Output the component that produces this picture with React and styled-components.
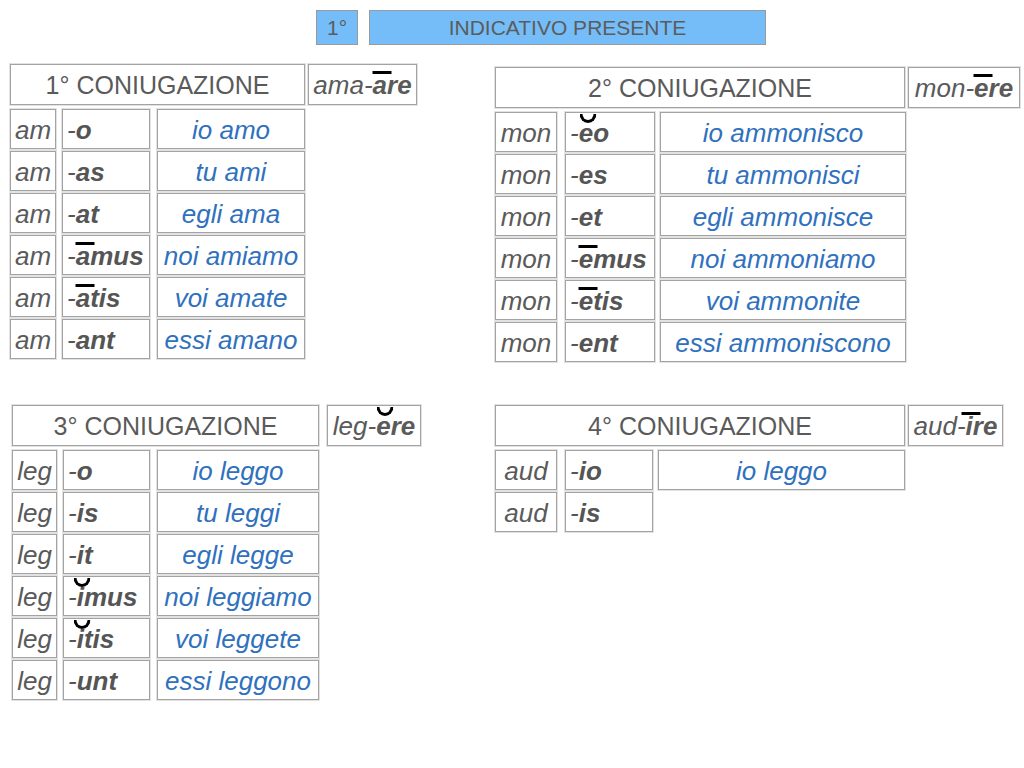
import React from 'react'
import styled, { createGlobalStyle, css } from 'styled-components'

const Global = createGlobalStyle`
  body {
    margin: 0;
    background: #fff;
    font-family: "Liberation Sans", Arial, sans-serif;
  }
`

const Long = ({ children }) => <Mark $kind="long">{children}</Mark>
const Short = ({ children }) => <Mark $kind="short">{children}</Mark>

const sections = [
  {
    title: '1° CONIUGAZIONE',
    inf: ['ama-', <><Long>a</Long>re</>],
    dx: 0, dy: 0, head: 295, infGap: 3, inf_w: 109,
    cols: [46, 88, 148], gaps: [6, 7],
    rows: [
      ['am', <>o</>, 'io amo'],
      ['am', <>as</>, 'tu ami'],
      ['am', <>at</>, 'egli ama'],
      ['am', <><Long>a</Long>mus</>, 'noi amiamo'],
      ['am', <><Long>a</Long>tis</>, 'voi amate'],
      ['am', <>ant</>, 'essi amano'],
    ],
  },
  {
    title: '2° CONIUGAZIONE',
    inf: ['mon-', <><Long>e</Long>re</>],
    dx: 0, dy: 3, head: 410, infGap: 3, inf_w: 112,
    cols: [62, 90, 246], gaps: [8, 5],
    rows: [
      ['mon', <><Short>e</Short>o</>, 'io ammonisco'],
      ['mon', <>es</>, 'tu ammonisci'],
      ['mon', <>et</>, 'egli ammonisce'],
      ['mon', <><Long>e</Long>mus</>, 'noi ammoniamo'],
      ['mon', <><Long>e</Long>tis</>, 'voi ammonite'],
      ['mon', <>ent</>, 'essi ammoniscono'],
    ],
  },
  {
    title: '3° CONIUGAZIONE',
    inf: ['leg-', <><Short>e</Short>re</>],
    dx: 2, dy: 0, head: 307, infGap: 8, inf_w: 94,
    cols: [45, 87, 162], gaps: [6, 7],
    rows: [
      ['leg', <>o</>, 'io leggo'],
      ['leg', <>is</>, 'tu leggi'],
      ['leg', <>it</>, 'egli legge'],
      ['leg', <><Short>i</Short>mus</>, 'noi leggiamo'],
      ['leg', <><Short>i</Short>tis</>, 'voi leggete'],
      ['leg', <>unt</>, 'essi leggono'],
    ],
  },
  {
    title: '4° CONIUGAZIONE',
    inf: ['aud-', <><Long>i</Long>re</>],
    dx: 0, dy: 0, head: 410, infGap: 3, inf_w: 95,
    cols: [62, 88, 247], gaps: [8, 5],
    rows: [
      ['aud', <>io</>, 'io leggo'],
      ['aud', <>is</>, null],
    ],
  },
]

const App = () => {
  return (
    <Page>
      <Global />
      <TopBar>
        <NumBox>1°</NumBox>
        <TitleBox>INDICATIVO PRESENTE</TitleBox>
      </TopBar>
      <Grid>
        {sections.map((s) => (
          <Section key={s.title} $dx={s.dx} $dy={s.dy}>
            <HeadRow $gap={s.infGap}>
              <Header $w={s.head}>{s.title}</Header>
              <Infinitive $w={s.inf_w}>
                {s.inf[0]}
                <b>{s.inf[1]}</b>
              </Infinitive>
            </HeadRow>
            <Rows>
              {s.rows.map((r, i) => (
                <Row key={i}>
                  <Stem $w={s.cols[0]}>{r[0]}</Stem>
                  <Ending $w={s.cols[1]} $ml={s.gaps[0]}>
                    <Dash>-</Dash>
                    <b>{r[1]}</b>
                  </Ending>
                  {r[2] && (
                    <Translation $w={s.cols[2]} $ml={s.gaps[1]}>
                      {r[2]}
                    </Translation>
                  )}
                </Row>
              ))}
            </Rows>
          </Section>
        ))}
      </Grid>
    </Page>
  )
}

const Page = styled.div`
  width: 1024px;
  height: 768px;
  box-sizing: border-box;
  padding-top: 10px;
  overflow: hidden;
`

const TopBar = styled.div`
  display: flex;
  gap: 11px;
  padding-left: 316px;
  height: 35px;
`

const blueBox = css`
  box-sizing: border-box;
  height: 35px;
  background: #74bdf8;
  border: 1px solid #9a9a9a;
  color: #5c5c5c;
  font-size: 21px;
  display: flex;
  align-items: center;
  justify-content: center;
`

const NumBox = styled.div`
  ${blueBox};
  width: 42px;
`

const TitleBox = styled.div`
  ${blueBox};
  width: 397px;
`

const Grid = styled.div`
  display: grid;
  grid-template-columns: 485px 1fr;
  align-items: start;
  row-gap: 43px;
  margin-top: 19px;
  padding-left: 10px;
`

const Section = styled.div`
  margin-left: ${(p) => p.$dx}px;
  margin-top: ${(p) => p.$dy}px;
`

const HeadRow = styled.div`
  display: flex;
  gap: ${(p) => p.$gap}px;
`

const box = css`
  box-sizing: border-box;
  border: 1px solid #a3a3a3;
  box-shadow: 0 0 0 1px #e2e2e2;
  background: #fff;
  display: flex;
  align-items: center;
  white-space: nowrap;
`

const Header = styled.div`
  ${box};
  width: ${(p) => p.$w}px;
  height: 41px;
  justify-content: center;
  padding-top: 2px;
  font-size: 25px;
  color: #5a5a5a;
`

const Infinitive = styled.div`
  ${box};
  width: ${(p) => p.$w}px;
  height: 41px;
  justify-content: center;
  padding-top: 2px;
  font-size: 26px;
  font-style: italic;
  color: #5a5a5a;
  b {
    font-weight: bold;
  }
`

const Rows = styled.div`
  display: flex;
  flex-direction: column;
  gap: 2px;
  margin-top: 4px;
`

const Row = styled.div`
  display: flex;
  height: 40px;
`

const Cell = styled.div`
  ${box};
  width: ${(p) => p.$w}px;
  margin-left: ${(p) => p.$ml || 0}px;
  height: 40px;
  padding-top: 2px;
  font-size: 26px;
  font-style: italic;
`

const Stem = styled(Cell)`
  justify-content: center;
  color: #5a5a5a;
`

const Ending = styled(Cell)`
  padding-left: 4px;
  color: #555;
  b {
    font-weight: bold;
  }
`

const Dash = styled.span`
  font-weight: normal;
`

const Translation = styled(Cell)`
  justify-content: center;
  color: #2f71bd;
`

const Mark = styled.span`
  position: relative;
  display: inline-block;
  &::before {
    content: '';
    position: absolute;
    left: calc(50% + 2px);
    transform: translateX(-50%);
    ${(p) =>
      p.$kind === 'long'
        ? css`
            top: 1px;
            width: 19px;
            height: 3px;
            background: #000;
          `
        : css`
            top: -4px;
            width: 11px;
            height: 6px;
            border: 3.5px solid #000;
            border-top: 0;
            border-radius: 0 0 50% 50% / 0 0 100% 100%;
          `}
  }
`

export default App
